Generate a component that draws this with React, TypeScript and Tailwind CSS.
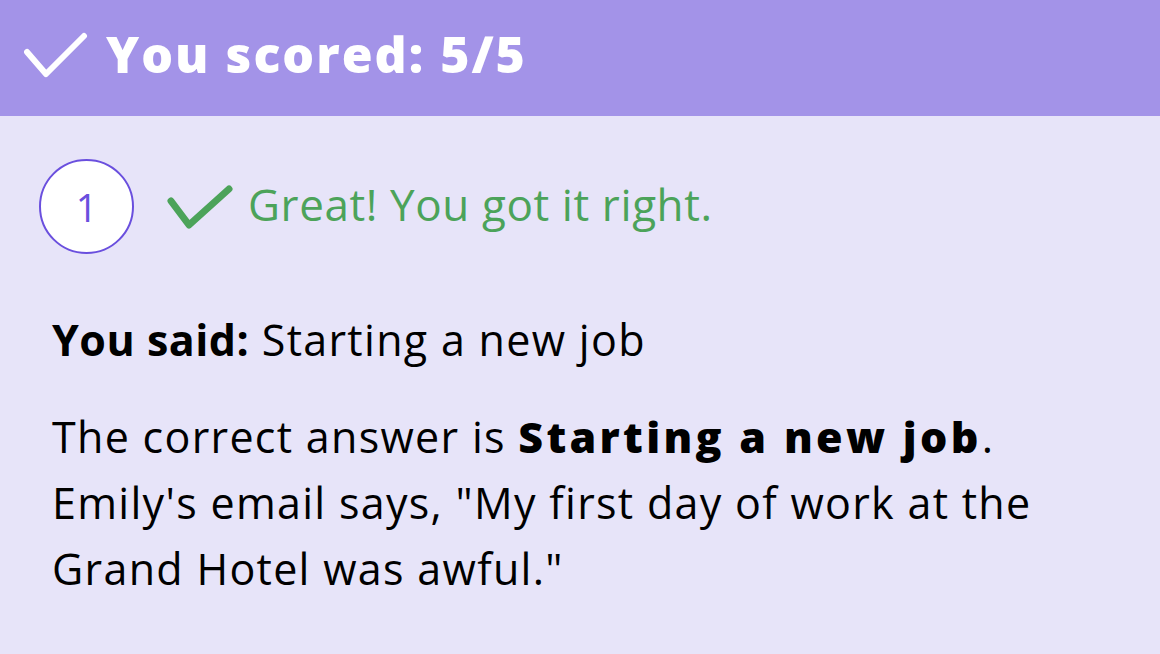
export default function App() {
  return (
    <div className="w-[1160px] h-[654px] bg-[#e7e4f9] overflow-hidden" style={{ fontFamily: '"Open Sans", Lato, sans-serif' }}>
      {/* Header */}
      <div className="h-[116px] bg-[#a393e8] flex items-center pl-[24px] pb-[8px]">
        <svg width="64" height="48" viewBox="0 0 64 48" fill="none" className="shrink-0 mt-[4px]">
          <path d="M3 20 L22 42 L60 4" stroke="white" strokeWidth="6" strokeLinecap="round" strokeLinejoin="round" />
        </svg>
        <span className="ml-[18px] text-white text-[50px] font-extrabold tracking-[2px]">You scored: 5/5</span>
      </div>

      {/* Result row */}
      <div className="flex items-center pl-[39px] pt-[43px]">
        <div className="w-[95px] h-[95px] rounded-full border-2 border-[#6a4fde] bg-white flex items-center justify-center text-[#6a4fde] text-[38px] leading-none">
          1
        </div>
        <svg width="66" height="44" viewBox="0 0 66 44" fill="none" className="ml-[33px] shrink-0">
          <path d="M4 16 L22 40 L62 4" stroke="#4ca35a" strokeWidth="7" strokeLinecap="round" strokeLinejoin="round" />
        </svg>
        <span className="ml-[15px] text-[#4ca35a] text-[44px] tracking-[0.6px] -mt-[6px]">Great! You got it right.</span>
      </div>

      {/* Explanation */}
      <div className="pl-[52px] pt-[53px] text-black text-[43px] leading-[66px] tracking-[1.3px]">
        <p>
          <span className="font-bold tracking-[0.5px]">You said:</span> Starting a new job
        </p>
        <p className="mt-[31px] w-[1000px]">
          The correct answer is <span className="font-extrabold tracking-[3.3px]">Starting a new job</span>. Emily's email says, "My first day of work at the Grand Hotel was awful."
        </p>
      </div>
    </div>
  );
}
